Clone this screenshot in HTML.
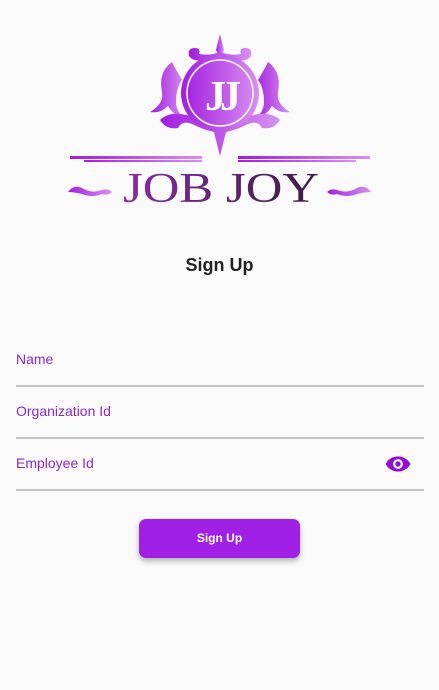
<!DOCTYPE html>
<html><head><meta charset="utf-8"><style>
html,body{margin:0;padding:0;background:#fafafa;width:439px;height:690px;overflow:hidden;font-family:"Liberation Sans",sans-serif;position:relative}
.t{position:absolute;left:0;width:439px;text-align:center;top:255px;font-size:18px;font-weight:bold;color:#222}
.lbl{position:absolute;left:16px;font-size:14px;color:#8a2bc9}
.ln{position:absolute;left:16px;width:408px;height:2px;background:#c4c4c4}
.btn{position:absolute;left:139px;top:519px;width:161px;height:39px;border-radius:7px;background:#a020e6;color:#fff;font-size:12px;font-weight:bold;text-align:center;line-height:39px;box-shadow:0 3px 6px rgba(0,0,0,0.3)}
</style></head><body>
<svg style="position:absolute;left:0;top:0" width="439" height="230">
<defs><linearGradient id="g" x1="0" x2="1"><stop offset="0" stop-color="#a21de0"/><stop offset="1" stop-color="#d890f0"/></linearGradient>
<linearGradient id="tg" x1="0" x2="1"><stop offset="0" stop-color="#8a2aa8"/><stop offset="1" stop-color="#3a1e3c"/></linearGradient></defs>
<g fill="url(#g)">
<path d="M220 34 L224 50 L220 58 L216 50 Z"/>
<path d="M195 48 q-8 0 -6 8 q4 6 14 4 q10 -2 17 4 q7 -6 17 -4 q10 2 14 -4 q2 -8 -6 -8 q-6 0 -4 6 q-10 2 -21 -2 q-11 4 -21 2 q2 -6 -4 -6z"/>
<path d="M172 62 q-14 10 -10 30 q2 12 -12 20 q10 2 18 -6 q6 10 18 14 q-10 -8 -10 -18 q0 -14 6 -22 q-6 -10 -10 -18z"/>
<path d="M268 62 q14 10 10 30 q-2 12 12 20 q-10 2 -18 -6 q-6 10 -18 14 q10 -8 10 -18 q0 -14 -6 -22 q6 -10 10 -18z"/>
<path d="M160 120 q10 -10 30 -4 q20 8 30 10 q10 -2 30 -10 q20 -6 30 4 q-6 10 -18 8 q-4 -8 -14 -4 q-12 6 -22 8 l-6 24 l-6 -24 q-10 -2 -22 -8 q-10 -4 -14 4 q-12 2 -18 -8z"/>
<circle cx="220" cy="93" r="39"/>
<rect x="70" y="156" width="132" height="3"/><rect x="84" y="160" width="118" height="2"/>
<rect x="238" y="156" width="132" height="3"/><rect x="238" y="160" width="118" height="2"/>
<path d="M68 192 q6 -8 14 -4 q10 6 20 2 q6 -2 10 2 q-4 4 -10 2 q-10 4 -20 0 q-8 -2 -14 -2z"/>
<path d="M371 192 q-6 -8 -14 -4 q-10 6 -20 2 q-6 -2 -10 2 q4 4 10 2 q10 4 20 0 q8 -2 14 -2z"/>
</g>
<circle cx="220" cy="93" r="33" fill="none" stroke="#fff" stroke-width="1.5"/>
<text x="220" y="110" text-anchor="middle" font-family="Liberation Serif,serif" font-size="42" font-weight="bold" fill="#fff" letter-spacing="-6">JJ</text>
<text x="221" y="202" text-anchor="middle" font-family="Liberation Serif,serif" font-size="42" fill="url(#tg)" textLength="196" lengthAdjust="spacingAndGlyphs">JOB JOY</text>
</svg>
<div class="t">Sign Up</div>
<div class="lbl" style="top:351px">Name</div><div class="ln" style="top:385px"></div>
<div class="lbl" style="top:403px">Organization Id</div><div class="ln" style="top:437px"></div>
<div class="lbl" style="top:455px">Employee Id</div><div class="ln" style="top:489px"></div>
<svg style="position:absolute;left:385px;top:455px" width="26" height="18" viewBox="0 0 24 16"><path d="M12 1C6 1 2 5 0.5 8 2 11 6 15 12 15s10-4 11.5-7C22 5 18 1 12 1z" fill="#8e10d8"/><circle cx="12" cy="8" r="4.5" fill="#fafafa"/><circle cx="12" cy="8" r="2.5" fill="#8e10d8"/></svg>
<div class="btn">Sign Up</div>
</body></html>
